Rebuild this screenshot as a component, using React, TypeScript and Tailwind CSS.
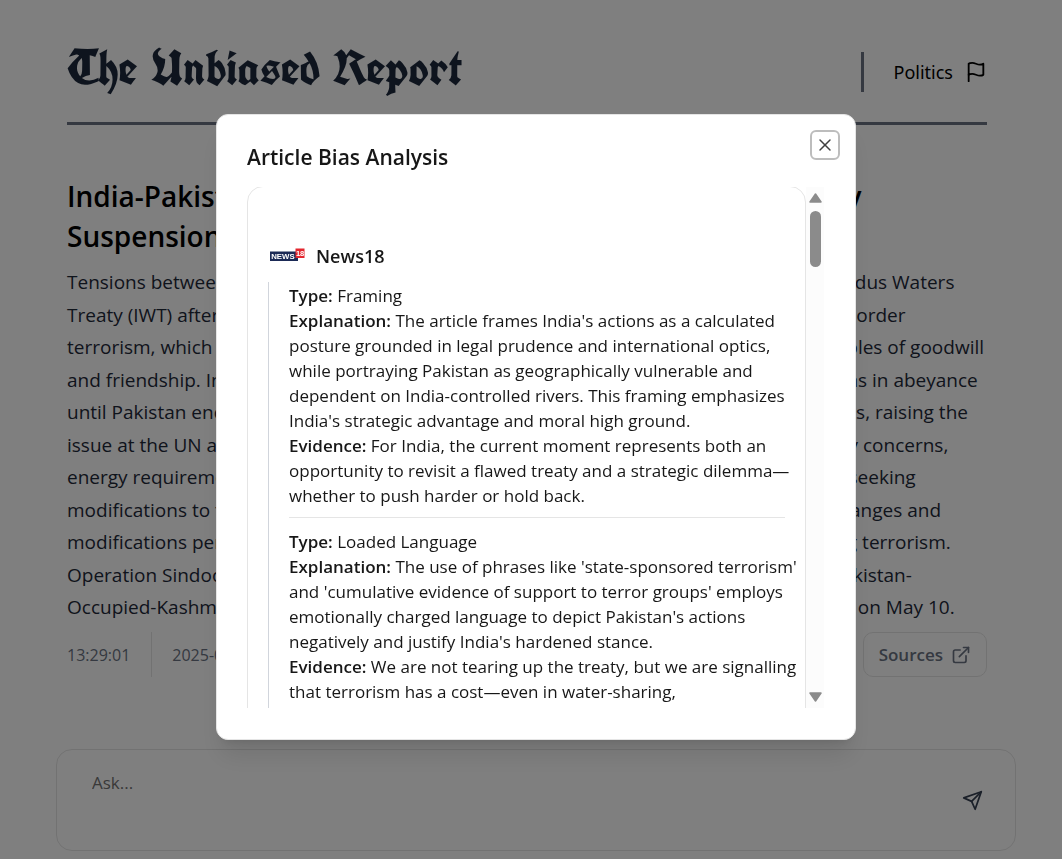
import React from "react";
import { ExternalLink, X } from "lucide-react";

const summaryLines = [
  "Tensions between India and Pakistan have intensified since India suspended the entire Indus Waters",
  "Treaty (IWT) after the Pahalgam attack. India cites Pakistan's repeated support for cross-border",
  "terrorism, which it says violates the preamble of the treaty, which was founded on principles of goodwill",
  "and friendship. India has stated that it would continue to hold all of the treaty's obligations in abeyance",
  "until Pakistan ends its support for terrorism. Pakistan has publicly rejected India's grounds, raising the",
  "issue at the UN and warning of consequences. India also cites its long-term water security concerns,",
  "energy requirements, and climate change as key reasons for reviewing the treaty, and is seeking",
  "modifications to the treaty. Officials currently argue that technological, environmental changes and",
  "modifications permit a new negotiation, with no further dialogue to be held while backing terrorism.",
  "Operation Sindoor targeted several militant infrastructure deep inside Pakistan and in Pakistan-",
  "Occupied-Kashmir, and was finally followed by an understanding to stop all military firing on May 10.",
];

const findings = [
  {
    type: "Framing",
    explanation: [
      "The article frames India's actions as a calculated",
      "posture grounded in legal prudence and international optics,",
      "while portraying Pakistan as geographically vulnerable and",
      "dependent on India-controlled rivers. This framing emphasizes",
      "India's strategic advantage and moral high ground.",
    ],
    evidence: [
      "For India, the current moment represents both an",
      "opportunity to revisit a flawed treaty and a strategic dilemma—",
      "whether to push harder or hold back.",
    ],
  },
  {
    type: "Loaded Language",
    explanation: [
      "The use of phrases like 'state-sponsored terrorism'",
      "and 'cumulative evidence of support to terror groups' employs",
      "emotionally charged language to depict Pakistan's actions",
      "negatively and justify India's hardened stance.",
    ],
    evidence: [
      "We are not tearing up the treaty, but we are signalling",
      "that terrorism has a cost—even in water-sharing,",
    ],
  },
];

function Labelled({ label, lines }: { label: string; lines: string[] }) {
  return (
    <p className="whitespace-nowrap">
      <strong className="font-semibold">{label}:</strong>{" "}
      {lines.map((line, i) => (
        <React.Fragment key={line}>
          {i > 0 && <br />}
          {line}
        </React.Fragment>
      ))}
    </p>
  );
}

function FlagIcon() {
  return (
    <svg className="size-[22px]" viewBox="0 0 24 24" fill="none" stroke="currentColor" strokeWidth="2" strokeLinecap="round" strokeLinejoin="round" aria-hidden="true">
      <path d="M4 15s1-1 4-1 5 2 8 2 4-1 4-1V3s-1 1-4 1-5-2-8-2-4 1-4 1z" />
      <path d="M4 22v-7" />
    </svg>
  );
}

function SendIcon() {
  return (
    <svg className="size-[21px]" viewBox="0 0 24 24" fill="none" stroke="currentColor" strokeWidth="2" strokeLinecap="round" strokeLinejoin="round" aria-hidden="true">
      <path d="m22 2-7 20-4-9-9-4Z" />
      <path d="M22 2 11 13" />
    </svg>
  );
}

function News18Logo() {
  return (
    <svg className="h-4 w-[35px]" viewBox="0 0 35 16" role="img" aria-label="News18 logo">
      <rect x="0" y="3.5" width="28" height="9.5" fill="#1b2a56" />
      <rect x="25.5" y="0.5" width="9" height="9.5" fill="#e3262e" />
      <text x="1.2" y="11.1" fontFamily="Liberation Sans" fontWeight="700" fontSize="7.8" fill="#fff">NEWS</text>
      <text x="25.9" y="8.2" fontFamily="Liberation Sans" fontWeight="700" fontSize="7.5" fill="#fff">18</text>
    </svg>
  );
}

function Page() {
  return (
    <div className="pt-9">
      <div className="pr-[75px] pl-[67px]">
        <header className="flex h-[89px] items-start justify-between border-b-3 border-gray-500">
          <h1 className="font-['Old_English_Text_MT','UnifrakturCook','Liberation_Serif',serif] text-[49px] leading-[64px] font-bold whitespace-nowrap text-slate-800">
            The Unbiased Report
          </h1>
          <a href="#politics" className="mt-4 flex h-10 items-center gap-3 border-l-3 border-gray-500 pl-[30px] font-['Noto_Sans',sans-serif] text-[18px] text-black">
            Politics
            <FlagIcon />
          </a>
        </header>
        <article>
          <h2 className="mt-[51px] text-[28px] leading-10 font-semibold whitespace-nowrap text-black">
            India-Pakistan Tensions Escalate Amid Indus Waters Treaty
            <br />
            Suspension
          </h2>
          <p className="mt-[10px] text-[19px] text-gray-800">
            {summaryLines.map((line) => (
              <span key={line} className="block leading-8 whitespace-nowrap even:pt-px">
                {line}
              </span>
            ))}
          </p>
          <footer className="mt-[9px] flex h-[45px] items-center justify-between text-[17px] text-gray-500">
            <div className="flex h-full items-center text-[16px]">
              <time className="flex h-full items-center border-r border-neutral-200 pr-[21px]">13:29:01</time>
              <time className="pl-5">2025-05-12</time>
            </div>
            <button type="button" className="flex h-full items-center gap-2 rounded-[10px] border border-neutral-200 px-[15px] font-semibold">
              Sources
              <ExternalLink className="size-5" />
            </button>
          </footer>
        </article>
      </div>
      <form className="mt-[72px] mr-[46px] ml-14 flex h-[102px] items-center rounded-2xl border border-neutral-200 pr-8 pl-[35px]">
        <textarea aria-label="Ask a question" placeholder="Ask..." className="h-[58px] flex-1 resize-none text-[17px] leading-6 outline-none placeholder:text-neutral-500" />
        <button type="button" aria-label="Send" className="text-gray-700">
          <SendIcon />
        </button>
      </form>
    </div>
  );
}

function Scrollbar() {
  return (
    <div className="flex w-[18px] shrink-0 flex-col items-center bg-[#fcfcfc] py-1.5" aria-hidden="true">
      <svg className="h-[10px] w-[13px]" viewBox="0 0 13 10">
        <path d="M6.5 1 12 9H1Z" fill="#8b8b8b" stroke="#8b8b8b" strokeWidth="1.5" strokeLinejoin="round" />
      </svg>
      <div className="mt-2 h-14 w-[11px] rounded-full bg-[#8b8b8b]" />
      <svg className="mt-auto h-[10px] w-[13px]" viewBox="0 0 13 10">
        <path d="M6.5 9 12 1H1Z" fill="#8b8b8b" stroke="#8b8b8b" strokeWidth="1.5" strokeLinejoin="round" />
      </svg>
    </div>
  );
}

function BiasDialog() {
  return (
    <div className="fixed inset-0 flex items-center justify-center bg-black/50 pb-[5px] pl-[10px]">
      <div role="dialog" aria-modal="true" aria-labelledby="bias-title" className="relative w-full max-w-[640px] rounded-xl border border-neutral-200 bg-white pt-[30px] pr-[31px] pb-[31px] pl-[30px] shadow-xl">
        <h2 id="bias-title" className="text-[21px] leading-6 font-semibold text-neutral-900">
          Article Bias Analysis
        </h2>
        <button type="button" aria-label="Close" className="absolute top-[15px] right-[15px] flex size-[30px] items-center justify-center rounded-md border-2 border-neutral-400/70 text-neutral-700">
          <X className="size-5" strokeWidth={1.75} />
        </button>
        <div className="mt-[18px] flex h-[521px] overflow-hidden">
          <section className="-mt-px h-[600px] min-w-0 flex-1 rounded-2xl border border-neutral-200 px-5 pt-[55px] text-neutral-900">
            <h3 className="flex h-7 items-center gap-[11px] pl-0.5 text-[18px] font-semibold">
              <News18Logo />
              News18
            </h3>
            <ul className="mt-3 h-full border-l border-gray-300 pl-5 text-[17px] leading-[25px]">
              {findings.map((f, i) => (
                <li key={f.type} className={i > 0 ? "border-t border-neutral-200 pt-[11px]" : "pt-px pb-[9px]"}>
                  <Labelled label="Type" lines={[f.type]} />
                  <Labelled label="Explanation" lines={f.explanation} />
                  <Labelled label="Evidence" lines={f.evidence} />
                </li>
              ))}
            </ul>
          </section>
          <Scrollbar />
        </div>
      </div>
    </div>
  );
}

export default function App() {
  return (
    <main className="min-h-screen overflow-hidden bg-white font-['Segoe_UI','Open_Sans',sans-serif]">
      <Page />
      <BiasDialog />
    </main>
  );
}
